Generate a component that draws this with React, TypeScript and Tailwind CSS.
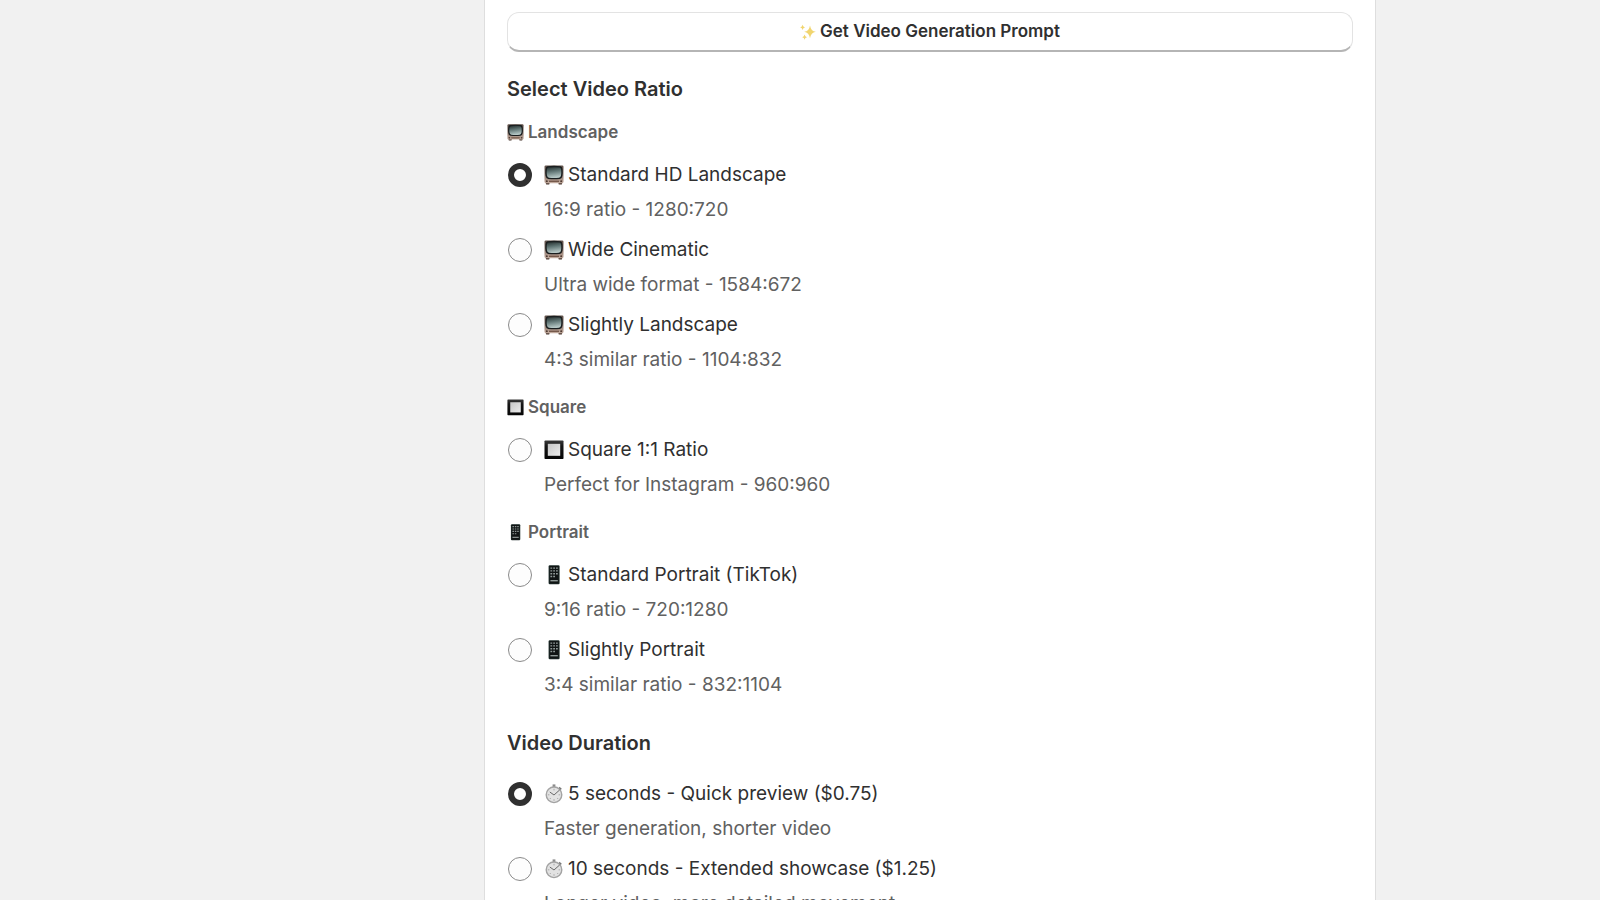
import { useState, type ReactNode } from "react";

type Option = { value: string; label: string; help: string };

type Group = {
  title: string;
  icon: (props: { className: string }) => ReactNode;
  options: Option[];
};

function TvIcon({ className }: { className: string }) {
  return (
    <svg viewBox="0 0 20 20" className={className} aria-hidden="true">
      <defs>
        <linearGradient id="tv-screen" x1="0" y1="0" x2="0.2" y2="1">
          <stop offset="0" stopColor="#26302f" />
          <stop offset="0.45" stopColor="#5f7473" />
          <stop offset="1" stopColor="#b4c6c4" />
        </linearGradient>
        <linearGradient id="tv-body" x1="0" y1="0" x2="0" y2="1">
          <stop offset="0" stopColor="#5e4f48" />
          <stop offset="0.7" stopColor="#a08a7e" />
          <stop offset="1" stopColor="#c4ada0" />
        </linearGradient>
      </defs>
      <path d="M1.6 17.6h4.2l-.6 1.8H2.2zM14.2 17.6h4.2l-.6 1.8h-3z" fill="#4a3830" />
      <rect x="0.5" y="0.4" width="19" height="17.8" rx="1.4" fill="url(#tv-body)" />
      <path
        d="M3.4 1.2Q10 .4 16.6 1.2Q18.4 1.6 18.6 4.4Q19 8 18.4 11Q18 13.6 15.8 13.9Q10 14.6 4.2 13.9Q2 13.6 1.6 11Q1 8 1.4 4.4Q1.6 1.6 3.4 1.2z"
        fill="#1a1e1f"
      />
      <path
        d="M4.4 2.6Q10 1.8 15.6 2.6Q17 3 17.2 5Q17.5 8 17 10.4Q16.6 12.4 15 12.7Q10 13.3 5 12.7Q3.4 12.4 3 10.4Q2.5 8 2.8 5Q3 3 4.4 2.6z"
        fill="url(#tv-screen)"
      />
      <rect x="5" y="15.6" width="10" height="1.4" fill="#75594b" />
      <circle cx="2.8" cy="16.2" r="1" fill="#4e3a32" />
      <circle cx="17.2" cy="16.2" r="1" fill="#4e3a32" />
    </svg>
  );
}

function SquareIcon({ className }: { className: string }) {
  return (
    <svg viewBox="0 0 20 20" className={className} aria-hidden="true">
      <defs>
        <linearGradient id="square-frame" x1="0" y1="0" x2="0" y2="1">
          <stop offset="0" stopColor="#3a3a3a" />
          <stop offset="0.3" stopColor="#161616" />
          <stop offset="1" stopColor="#050505" />
        </linearGradient>
        <linearGradient id="square-fill" x1="0" y1="0" x2="1" y2="1">
          <stop offset="0" stopColor="#c6c6c6" />
          <stop offset="1" stopColor="#ececec" />
        </linearGradient>
      </defs>
      <rect x="0.5" y="0.5" width="19" height="18.6" rx="0.8" fill="url(#square-frame)" />
      <rect x="3.8" y="3.8" width="12.4" height="12" fill="url(#square-fill)" />
    </svg>
  );
}

function PhoneIcon({ className }: { className: string }) {
  return (
    <svg viewBox="0 0 20 20" className={className} aria-hidden="true">
      <rect x="4.6" y="0.2" width="11" height="19" rx="1.2" fill="#1d2b28" />
      <rect x="5.6" y="1" width="9" height="17.4" fill="#101414" />
      <g fill="#8e9896">
        <path d="M6.4 2.4h1.8v1.4H6.4zM9.2 2.4H11v1.4H9.2zM12 2.4h1.8v1.4H12z" />
        <path d="M6.4 5.2h1.8v1.4H6.4zM9.2 5.2H11v1.4H9.2zM12 5.2h1.8v1.4H12z" />
        <path d="M6.4 8h1.8v1.4H6.4zM9.2 8H11v1.4H9.2zM12 8h1.8v1.4H12z" />
        <path d="M6.4 10.8h1.8v1.4H6.4zM9.2 10.8H11v1.4H9.2z" />
        <path d="M6.4 15h7.4v1.4H6.4z" />
      </g>
    </svg>
  );
}

function StopwatchIcon({ className }: { className: string }) {
  return (
    <svg viewBox="0 0 20 20" className={className} aria-hidden="true">
      <path d="M8.6.4h2.8v2.8H8.6z" fill="#8c8c8c" />
      <path d="M15.6 2.8l2.2 1.9-1.5 1.7-2-1.8z" fill="#777" />
      <circle cx="10" cy="10.8" r="7.8" fill="#e2e2e2" stroke="#a3a3a3" strokeWidth="1.4" />
      <g stroke="#9b9b9b" strokeWidth="0.8">
        <path d="M10 4.8v1.6M10 15.2v1.6M3.8 10.8h1.6M14.6 10.8h1.6" />
        <path d="M5.8 15l1-1M14.2 15l-1-1" />
      </g>
      <path d="M5.8 8l4.2 3 5.6-5" fill="none" stroke="#6a6a6a" strokeWidth="1" />
    </svg>
  );
}

function SparklesIcon({ className }: { className: string }) {
  return (
    <svg viewBox="0 0 16 16" className={className} aria-hidden="true">
      <g fill="#f1d56f">
        <path d="M10 1.4Q10.9 7 15.8 7.8Q10.9 8.6 10 14.2Q9.1 8.6 4.2 7.8Q9.1 7 10 1.4z" />
        <path d="M2.6.8Q3 3 5 3.4Q3 3.8 2.6 6Q2.2 3.8.2 3.4Q2.2 3 2.6.8z" />
        <path d="M4.6 10.6Q5 12.8 7 13.2Q5 13.6 4.6 15.8Q4.2 13.6 2.2 13.2Q4.2 12.8 4.6 10.6z" />
      </g>
    </svg>
  );
}

const ratioGroups: Group[] = [
  {
    title: "Landscape",
    icon: TvIcon,
    options: [
      { value: "1280:720", label: "Standard HD Landscape", help: "16:9 ratio - 1280:720" },
      { value: "1584:672", label: "Wide Cinematic", help: "Ultra wide format - 1584:672" },
      { value: "1104:832", label: "Slightly Landscape", help: "4:3 similar ratio - 1104:832" },
    ],
  },
  {
    title: "Square",
    icon: SquareIcon,
    options: [
      { value: "960:960", label: "Square 1:1 Ratio", help: "Perfect for Instagram - 960:960" },
    ],
  },
  {
    title: "Portrait",
    icon: PhoneIcon,
    options: [
      { value: "720:1280", label: "Standard Portrait (TikTok)", help: "9:16 ratio - 720:1280" },
      { value: "832:1104", label: "Slightly Portrait", help: "3:4 similar ratio - 832:1104" },
    ],
  },
];

const durations: Option[] = [
  { value: "5", label: "5 seconds - Quick preview ($0.75)", help: "Faster generation, shorter video" },
  { value: "10", label: "10 seconds - Extended showcase ($1.25)", help: "Longer video, more detailed movement" },
];

type ChoiceListProps = {
  name: string;
  options: Option[];
  icon: Group["icon"];
  selected: string;
  onSelect: (value: string) => void;
};

function ChoiceList({ name, options, icon: Icon, selected, onSelect }: ChoiceListProps) {
  return (
    <div className="flex flex-col gap-3 text-[19px] leading-7">
      {options.map((o) => (
        <div key={o.value} className="flex flex-col gap-[7px]">
          <label className="flex items-center cursor-pointer">
            <input
              type="radio"
              name={name}
              value={o.value}
              checked={selected === o.value}
              onChange={() => onSelect(o.value)}
              aria-describedby={`${name}-${o.value}`}
              className="appearance-none shrink-0 ml-px mr-3 w-6 h-6 rounded-full border border-[#8a8a8a] bg-[#fdfdfd] checked:border-[6px] checked:border-[#303030] checked:bg-white"
            />
            <Icon className="shrink-0 w-5 h-5 mr-1" />
            <span>{o.label}</span>
          </label>
          <p id={`${name}-${o.value}`} className="pl-[37px] text-[#616161]">
            {o.help}
          </p>
        </div>
      ))}
    </div>
  );
}

function App() {
  const [ratio, setRatio] = useState("1280:720");
  const [duration, setDuration] = useState("5");

  return (
    <div className="h-screen overflow-hidden bg-[#f1f1f1] pl-[260px] font-['Inter',sans-serif] text-[#303030]">
      <main className="mx-auto max-w-[890px] bg-white px-[22px] pt-3 pb-6 shadow-[0_0_0_1px_#dedede]">
        <button
          type="button"
          className="flex items-center justify-center gap-1 w-full h-10 rounded-xl border border-[#e3e3e3] border-b-2 border-b-[#b5b5b5] bg-white text-[17px] font-semibold cursor-pointer"
        >
          <SparklesIcon className="w-4 h-4" />
          Get Video Generation Prompt
        </button>

        <section className="mt-[23px]">
          <h2 className="mb-[15px] text-[20px] leading-7 font-semibold">Select Video Ratio</h2>
          <div className="flex flex-col gap-[19px]">
            {ratioGroups.map((g) => (
              <div key={g.title}>
                <h3 className="flex items-center gap-1 mb-[15px] text-[17px] leading-7 font-semibold text-[#616161]">
                  <g.icon className="w-[17px] h-[17px]" />
                  {g.title}
                </h3>
                <ChoiceList
                  name="ratio"
                  options={g.options}
                  icon={g.icon}
                  selected={ratio}
                  onSelect={setRatio}
                />
              </div>
            ))}
          </div>
        </section>

        <section className="mt-[30px]">
          <h2 className="mb-[23px] text-[20px] leading-7 font-semibold">Video Duration</h2>
          <ChoiceList
            name="duration"
            options={durations}
            icon={StopwatchIcon}
            selected={duration}
            onSelect={setDuration}
          />
        </section>
      </main>
    </div>
  );
}

export default App;
